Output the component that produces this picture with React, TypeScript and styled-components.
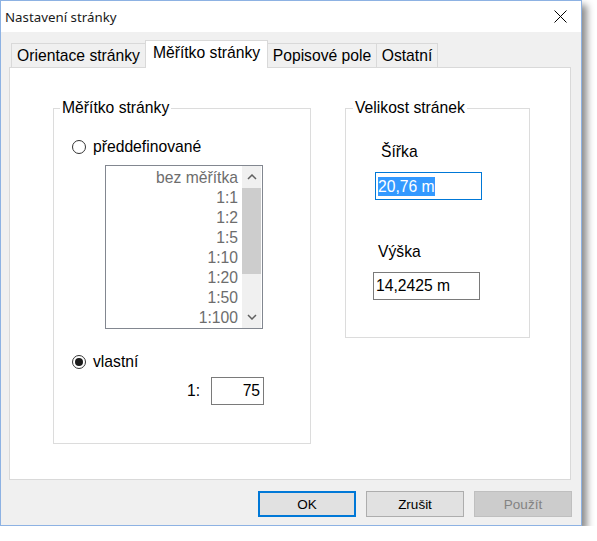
import React from 'react';
import styled, {createGlobalStyle} from 'styled-components';

const GlobalStyle = createGlobalStyle`
  html, body {
    margin: 0;
    background: #ffffff;
  }
  body {
    font-family: "Liberation Sans", Arial, sans-serif;
    color: #000;
  }
`;

const Window = styled.div`
  width: 582px;
  height: 526px;
  box-sizing: border-box;
  border: 1px solid #8db2e3;
  background: #f0f0f0;
  box-shadow: 5px 5px 7px rgba(0, 0, 0, 0.45);
  display: flex;
  flex-direction: column;
`;

const TitleBar = styled.div`
  height: 31px;
  background: #ffffff;
  display: flex;
  align-items: center;
  justify-content: space-between;
  padding: 0 14px 0 4px;
  font-family: "Noto Sans", sans-serif;
  font-size: 13.3px;
  color: #1a1a1a;
`;

const CloseIcon = styled.svg`
  width: 13px;
  height: 13px;
`;

const Body = styled.div`
  flex: 1;
  display: flex;
  flex-direction: column;
  padding: 8px 10px 8px 8px;
`;

const TabStrip = styled.div`
  height: 27px;
  display: flex;
  align-items: flex-end;
  padding-left: 2px;
  position: relative;
  z-index: 1;
`;

const Tab = styled.div<{$active?: boolean; $w: number}>`
  width: ${p => p.$w}px;
  height: ${p => (p.$active ? 28 : 24)}px;
  margin-bottom: ${p => (p.$active ? -1 : 0)}px;
  box-sizing: border-box;
  border: 1px solid #d9d9d9;
  border-bottom: none;
  background: ${p => (p.$active ? '#ffffff' : '#f0f0f0')};
  display: flex;
  align-items: center;
  justify-content: center;
  padding-bottom: ${p => (p.$active ? 3 : 0)}px;
  font-size: 15.7px;
  white-space: nowrap;
  z-index: ${p => (p.$active ? 2 : 1)};

  & + & {
    margin-left: -1px;
  }
`;

const Panel = styled.div`
  flex: 1;
  background: #ffffff;
  border: 1px solid #d9d9d9;
  display: flex;
  align-items: flex-start;
  padding: 31px 0 0 43px;
`;

const GroupBox = styled.fieldset<{$w: number; $h: number; $ml?: number}>`
  margin: 0 0 0 ${p => p.$ml ?? 0}px;
  padding: 0;
  width: ${p => p.$w}px;
  height: ${p => p.$h}px;
  box-sizing: border-box;
  border: 1px solid #dcdcdc;
  display: flex;
  flex-direction: column;
  align-items: flex-start;
`;

const Legend = styled.legend<{$ml: number}>`
  margin-left: ${p => p.$ml}px;
  padding: 0 2px;
  font-size: 15.7px;
  line-height: 18px;
`;

const RadioRow = styled.div<{$mt: number}>`
  display: flex;
  align-items: center;
  gap: 7px;
  height: 18px;
  margin: ${p => p.$mt}px 0 0 18px;
  font-size: 15.7px;
`;

const Radio = styled.span<{$checked?: boolean}>`
  width: 14px;
  height: 14px;
  box-sizing: border-box;
  border: 1px solid #333333;
  border-radius: 50%;
  display: flex;
  align-items: center;
  justify-content: center;

  &::after {
    content: '';
    width: 8px;
    height: 8px;
    border-radius: 50%;
    background: ${p => (p.$checked ? '#1a1a1a' : 'transparent')};
  }
`;

const ListBox = styled.div`
  margin: 9px 0 0 51px;
  width: 158px;
  height: 164px;
  box-sizing: border-box;
  border: 1px solid #828790;
  display: flex;
`;

const ListItems = styled.ul`
  flex: 1;
  margin: 0;
  padding: 2px 4px 0 0;
  list-style: none;
  text-align: right;
`;

const ListItem = styled.li`
  height: 20px;
  line-height: 20px;
  font-size: 15.7px;
  color: #6d6d6d;
`;

const ScrollBar = styled.div`
  width: 19px;
  margin-right: 1px;
  background: #f0f0f0;
  display: flex;
  flex-direction: column;
`;

const ScrollArrow = styled.div`
  height: 22px;
  display: flex;
  align-items: center;
  justify-content: center;
`;

const Thumb = styled.div`
  height: 86px;
  background: #cdcdcd;
`;

const Track = styled.div`
  flex: 1;
`;

const ScaleRow = styled.div`
  display: flex;
  align-items: center;
  gap: 11px;
  margin: 6px 0 0 133px;
  font-size: 15.7px;
`;

const FieldLabel = styled.div<{$mt: number; $ml: number}>`
  margin: ${p => p.$mt}px 0 0 ${p => p.$ml}px;
  font-size: 15.7px;
  line-height: 18px;
`;

const TextBox = styled.div<{$w: number; $mt?: number; $ml?: number; $focused?: boolean; $right?: boolean}>`
  width: ${p => p.$w}px;
  height: 28px;
  box-sizing: border-box;
  margin: ${p => p.$mt ?? 0}px 0 0 ${p => p.$ml ?? 0}px;
  border: 1px solid ${p => (p.$focused ? '#0078d7' : '#7a7a7a')};
  background: #ffffff;
  display: flex;
  align-items: center;
  justify-content: ${p => (p.$right ? 'flex-end' : 'flex-start')};
  padding: 0 3px 0 2px;
  font-size: 15.7px;
`;

const Selection = styled.span`
  background: #3399ff;
  color: #ffffff;
  line-height: 19px;
`;

const ButtonRow = styled.div`
  display: flex;
  justify-content: flex-end;
  gap: 10px;
  margin: 11px -1px 0 0;
`;

const Button = styled.div<{$default?: boolean; $disabled?: boolean}>`
  width: 98px;
  height: 26px;
  box-sizing: border-box;
  border: ${p => (p.$default ? '2px solid #0078d7' : `1px solid ${p.$disabled ? '#bfbfbf' : '#adadad'}`)};
  background: ${p => (p.$disabled ? '#cccccc' : '#e1e1e1')};
  color: ${p => (p.$disabled ? '#838383' : '#000000')};
  display: flex;
  align-items: center;
  justify-content: center;
  font-size: 13.5px;
`;

const scales = ['bez měřítka', '1:1', '1:2', '1:5', '1:10', '1:20', '1:50', '1:100'];

function Chevron({down}: {down?: boolean}) {
  return (
    <svg width="10" height="6" viewBox="0 0 10 6">
      <path
        d={down ? 'M1 1 L5 5 L9 1' : 'M1 5 L5 1 L9 5'}
        fill="none"
        stroke="#606060"
        strokeWidth="1.5"
      />
    </svg>
  );
}

export default function App() {
  return (
    <>
      <GlobalStyle />
      <Window>
        <TitleBar>
          <span>Nastavení stránky</span>
          <CloseIcon viewBox="0 0 13 13">
            <path d="M0.5 0.5 L12.5 12.5 M12.5 0.5 L0.5 12.5" stroke="#000" strokeWidth="1" />
          </CloseIcon>
        </TitleBar>
        <Body>
          <TabStrip>
            <Tab $w={135}>Orientace stránky</Tab>
            <Tab $w={123} $active>
              Měřítko stránky
            </Tab>
            <Tab $w={110}>Popisové pole</Tab>
            <Tab $w={62}>Ostatní</Tab>
          </TabStrip>
          <Panel>
            <GroupBox $w={258} $h={345}>
              <Legend $ml={6}>Měřítko stránky</Legend>
              <RadioRow $mt={21}>
                <Radio />
                předdefinované
              </RadioRow>
              <ListBox>
                <ListItems>
                  {scales.map(s => (
                    <ListItem key={s}>{s}</ListItem>
                  ))}
                </ListItems>
                <ScrollBar>
                  <ScrollArrow>
                    <Chevron />
                  </ScrollArrow>
                  <Thumb />
                  <Track />
                  <ScrollArrow>
                    <Chevron down />
                  </ScrollArrow>
                </ScrollBar>
              </ListBox>
              <RadioRow $mt={24}>
                <Radio $checked />
                vlastní
              </RadioRow>
              <ScaleRow>
                <span>1:</span>
                <TextBox $w={53} $right>
                  75
                </TextBox>
              </ScaleRow>
            </GroupBox>
            <GroupBox $w={185} $h={239} $ml={34}>
              <Legend $ml={7}>Velikost stránek</Legend>
              <FieldLabel $mt={26} $ml={35}>
                Šířka
              </FieldLabel>
              <TextBox $w={107} $mt={11} $ml={29} $focused>
                <Selection>20,76 m</Selection>
              </TextBox>
              <FieldLabel $mt={43} $ml={32}>
                Výška
              </FieldLabel>
              <TextBox $w={107} $mt={11} $ml={27}>
                14,2425 m
              </TextBox>
            </GroupBox>
          </Panel>
          <ButtonRow>
            <Button $default>OK</Button>
            <Button>Zrušit</Button>
            <Button $disabled>Použít</Button>
          </ButtonRow>
        </Body>
      </Window>
    </>
  );
}
